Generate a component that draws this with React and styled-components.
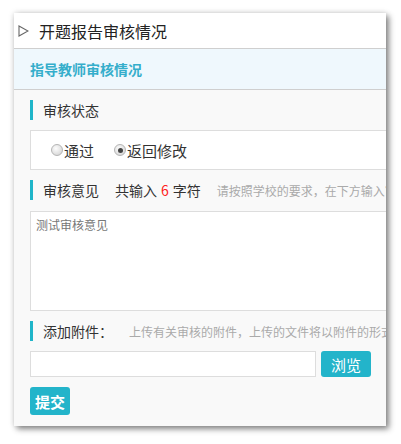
import React from "react";
import styled, { createGlobalStyle } from "styled-components";

const GlobalStyle = createGlobalStyle`
  html, body {
    margin: 0;
    padding: 0;
    background: #fff;
    font-family: "Noto Sans CJK SC", "Noto Sans", sans-serif;
    color: #333;
  }
  * {
    box-sizing: border-box;
  }
`;

const Page = styled.div`
  padding: 13px 0 16px 14px;
`;

const Dialog = styled.div`
  width: 372px;
  overflow: hidden;
  background: #f9f9f9;
  box-shadow: 3px 3px 6px rgba(0, 0, 0, 0.45), 0 0 6px rgba(0, 0, 0, 0.15);
`;

const TitleBar = styled.div`
  height: 36px;
  background: #fff;
  border-bottom: 1px solid #cfcfcf;
  display: flex;
  align-items: center;
  padding-left: 4px;
  gap: 10px;
  font-size: 16px;
  color: #222;
`;

const SubHeader = styled.div`
  height: 41px;
  background: #eff8fd;
  border-bottom: 1px solid #cfcfcf;
  display: flex;
  align-items: center;
  padding-left: 16px;
  font-size: 14px;
  font-weight: bold;
  color: #35aecb;
`;

const Body = styled.div`
  width: 560px;
  padding: 10px 0 11px 16px;
  display: flex;
  flex-direction: column;
  align-items: flex-start;
`;

const SectionHead = styled.div`
  align-self: stretch;
  height: 20px;
  border-left: 3px solid #1fb5c9;
  padding-left: 10px;
  display: flex;
  align-items: center;
  gap: 16px;
  font-size: 14px;
  white-space: nowrap;
  margin-bottom: ${(p) => p.$after || 10}px;
`;

const Count = styled.span`
  color: #333;
  em {
    font-style: normal;
    color: #ff2020;
    margin: 0 4px;
  }
`;

const Hint = styled.span`
  font-size: 12px;
  color: #aaa;
`;

const RadioBox = styled.div`
  align-self: stretch;
  height: 40px;
  background: #fff;
  border: 1px solid #ddd;
  display: flex;
  align-items: center;
  padding-left: 20px;
  gap: 20px;
  margin-bottom: 10px;
`;

const RadioLabel = styled.label`
  display: flex;
  align-items: center;
  font-size: 15px;
  color: #333;
`;

const RadioDot = styled.span`
  width: 12px;
  height: 12px;
  border-radius: 50%;
  border: 1px solid #b5b5b5;
  background: radial-gradient(circle at 40% 35%, #fdfdfd 0%, #dcdcdc 70%, #c8c8c8 100%);
  display: inline-flex;
  align-items: center;
  justify-content: center;
  margin-right: 1px;
  &::after {
    content: "";
    width: 5px;
    height: 5px;
    border-radius: 50%;
    background: ${(p) => (p.$checked ? "#444" : "transparent")};
  }
`;

const Opinion = styled.div`
  align-self: stretch;
  height: 100px;
  background: #fff;
  border: 1px solid #ddd;
  padding: 4px 5px;
  font-size: 12px;
  color: #777;
  margin-bottom: 10px;
`;

const FileRow = styled.div`
  display: flex;
  align-items: center;
  gap: 5px;
  margin-bottom: 10px;
`;

const FileField = styled.div`
  width: 286px;
  height: 26px;
  background: #fff;
  border: 1px solid #ddd;
`;

const Button = styled.button`
  width: ${(p) => p.$w}px;
  height: ${(p) => p.$h}px;
  border: none;
  border-radius: 3px;
  background: #23b4ca;
  color: #fff;
  font-family: inherit;
  font-size: ${(p) => p.$size}px;
  font-weight: ${(p) => (p.$bold ? "bold" : "normal")};
  padding: 0;
  cursor: pointer;
`;

function Triangle() {
  return (
    <svg width="11" height="12" viewBox="0 0 11 12">
      <polygon points="1,1 10,6 1,11" fill="none" stroke="#666" strokeWidth="1.1" />
    </svg>
  );
}

export default function App() {
  return (
    <>
      <GlobalStyle />
      <Page>
        <Dialog>
          <TitleBar>
            <Triangle />
            开题报告审核情况
          </TitleBar>
          <SubHeader>指导教师审核情况</SubHeader>
          <Body>
            <SectionHead>审核状态</SectionHead>
            <RadioBox>
              <RadioLabel>
                <RadioDot />
                通过
              </RadioLabel>
              <RadioLabel>
                <RadioDot $checked />
                返回修改
              </RadioLabel>
            </RadioBox>
            <SectionHead $after={11}>
              审核意见
              <Count>
                共输入<em>6</em>字符
              </Count>
              <Hint>请按照学校的要求，在下方输入审核意见</Hint>
            </SectionHead>
            <Opinion>测试审核意见</Opinion>
            <SectionHead>
              添加附件：
              <Hint>上传有关审核的附件，上传的文件将以附件的形式保存</Hint>
            </SectionHead>
            <FileRow>
              <FileField />
              <Button $w={50} $h={26} $size={15}>浏览</Button>
            </FileRow>
            <Button $w={40} $h={28} $size={15} $bold>提交</Button>
          </Body>
        </Dialog>
      </Page>
    </>
  );
}
